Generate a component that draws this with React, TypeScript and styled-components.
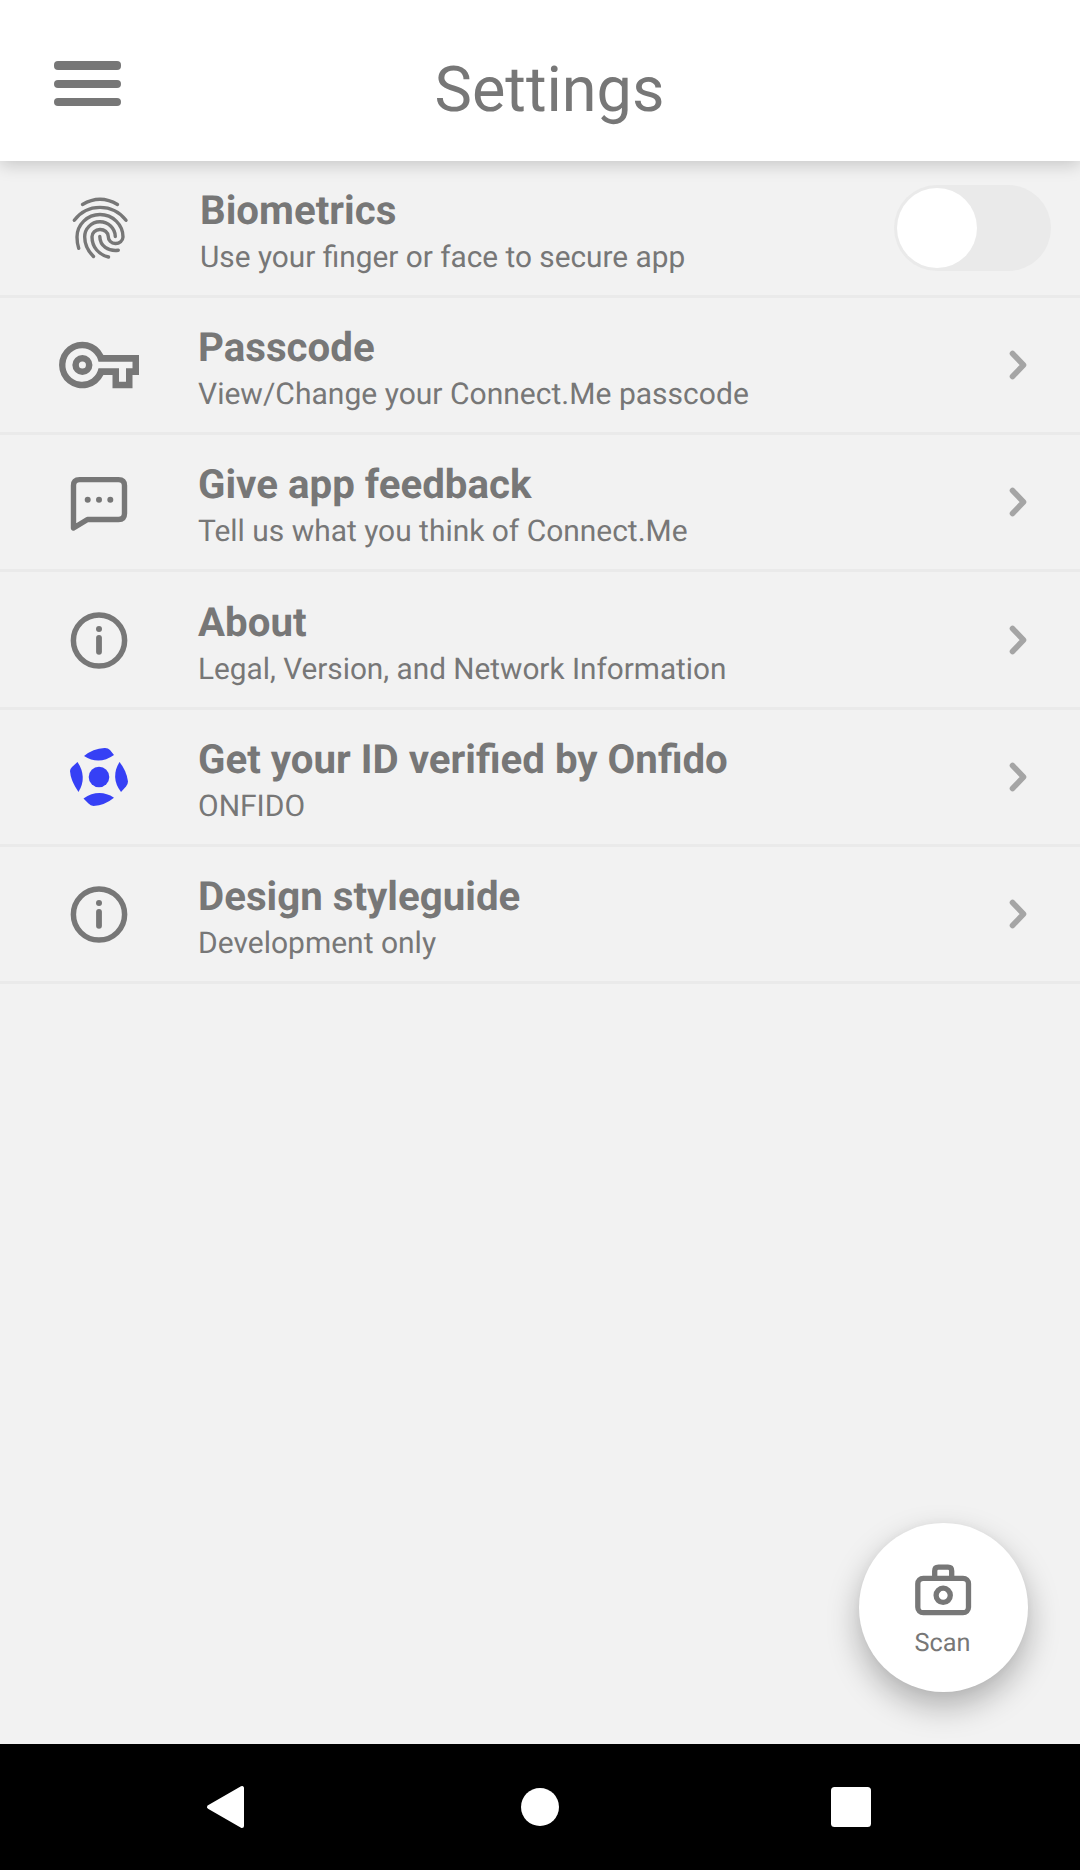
import React from "react";
import styled, { createGlobalStyle } from "styled-components";

const GlobalStyle = createGlobalStyle`
  * { box-sizing: border-box; }
  body { margin: 0; background: #f2f2f2; }
`;

const Screen = styled.div`
  display: flex;
  flex-direction: column;
  width: 1080px;
  height: 1870px;
  background: #f2f2f2;
  color: #777;
  font-family: Roboto, "Liberation Sans", sans-serif;
  text-rendering: geometricPrecision;
  overflow: hidden;
`;

const Header = styled.header`
  display: grid;
  grid-template-columns: 175px 1fr 156px;
  height: 161px;
  flex: none;
  background: #fff;
  box-shadow: 0 4px 16px rgba(0, 0, 0, 0.18);
  z-index: 1;
`;

const MenuButton = styled.button`
  display: flex;
  flex-direction: column;
  gap: 10.2px;
  width: 67px;
  height: max-content;
  margin: 61.4px 0 0 54px;
  padding: 0;
  border: 0;
  background: none;
`;

const MenuBar = styled.span`
  height: 8.2px;
  border-radius: 4px;
  background: #777;
`;

const Title = styled.h1`
  margin: 54px 0 0;
  font-size: 63px;
  line-height: 74px;
  font-weight: 400;
  text-align: center;
`;

const List = styled.main`
  flex: 1;
`;

const Row = styled.div<{ $inset?: number; $height?: number }>`
  display: grid;
  grid-template-columns: 198px 1fr auto;
  align-items: center;
  height: ${(p) => p.$height ?? 137}px;
  padding-left: ${(p) => p.$inset ?? 0}px;
  border-bottom: 3px solid #eaeaea;
`;

const IconCell = styled.div<{ $left?: number; $top?: number }>`
  display: flex;
  justify-content: center;
  padding-left: ${(p) => p.$left ?? 2}px;
  padding-right: ${(p) => (p.$left === 0 ? 2 : 0)}px;
  padding-top: ${(p) => p.$top ?? 0}px;
`;

const RowCopy = styled.div`
  padding-top: 12px;
`;

const RowTitle = styled.div`
  font-size: 40.25px;
  line-height: 46px;
  font-weight: 700;
  white-space: nowrap;
`;

const RowText = styled.div<{ $size?: number }>`
  padding-top: 1px;
  font-size: ${(p) => p.$size ?? 30}px;
  line-height: 46px;
  height: 46px;
  white-space: nowrap;
`;

const Toggle = styled.div`
  width: 157px;
  height: 86px;
  padding: 3px;
  margin-right: 29px;
  border-radius: 43px;
  background: #eaeaea;
`;

const Knob = styled.div`
  width: 80px;
  height: 80px;
  border-radius: 50%;
  background: #fff;
`;

const Chevron = styled.svg`
  display: block;
  margin-right: 52px;
`;

const ScanButton = styled.button`
  position: absolute;
  left: 859px;
  top: 1523px;
  display: flex;
  flex-direction: column;
  align-items: center;
  width: 169px;
  height: 169px;
  padding: 41px 2px 0 0;
  border: 0;
  border-radius: 50%;
  background: #fff;
  color: #777;
  font: 400 25.3px/30px Roboto, "Liberation Sans", sans-serif;
  text-rendering: geometricPrecision;
  box-shadow: 0 14px 32px rgba(0, 0, 0, 0.28), 0 0 10px rgba(0, 0, 0, 0.03);
`;

const ScanLabel = styled.span`
  margin-top: 12px;
`;

const NavBar = styled.nav`
  display: grid;
  grid-template-columns: 384px 312px 384px;
  place-items: center;
  height: 126px;
  flex: none;
  background: #000;
`;

const NavIcon = styled.svg<{ $shift?: number }>`
  display: block;
  margin-left: ${(p) => p.$shift ?? 0}px;
`;

const stroke = { fill: "none", stroke: "#777", strokeLinecap: "round", strokeLinejoin: "round" } as const;

const Fingerprint = () => (
  <svg width="100" height="100" viewBox="0 0 100 100">
    <g {...stroke} strokeWidth="3.4">
      <path d="M32.500 24.500Q50 14 67.500 24.500" />
      <path d="M24.300 40.300Q34 27.400 50 27.400T76 40.300" />
      <path d="M28.700 68.300C27 63 27 60 27 57A23 22.500 0 0 1 73 57A7.350 6.800 0 0 1 58.300 56.500A8.150 7.300 0 0 0 42 57C42 67.500 49 74.500 58.500 77" />
      <path d="M43.500 76.500C37 70 34.700 64 34.700 57A15.300 15 0 0 1 65.300 56.500" />
      <path d="M49.800 56.500C50 66 58 71.500 68.300 70.300" />
    </g>
  </svg>
);

const Key = () => (
  <svg width="120" height="90" viewBox="0 0 120 90">
    <path
      fill="#777"
      fillRule="evenodd"
      d="M63.400 35A23.300 23.300 0 1 0 63.400 55H72.500V68.300H92.500V55H99V35ZM42.500 28.300A16.700 16.700 0 1 0 58.500 48.300H79V61.700H86V48.300H92.500V41.700H58.500A16.700 16.700 0 0 0 42.500 28.300Z"
    />
    <circle cx="42.400" cy="45" r="6.800" fill="none" stroke="#777" strokeWidth="6.500" />
  </svg>
);

const Feedback = () => (
  <svg width="100" height="90" viewBox="0 0 100 90">
    <path {...stroke} strokeWidth="5.400" d="M23.500 68V25.500Q23.500 19.600 29.500 19.600H68.500Q74.500 19.600 74.500 25.500V53.500Q74.500 59.500 68.500 59.500H37.500Z" />
    <g fill="#777">
      <circle cx="37.700" cy="39.700" r="3" />
      <circle cx="49" cy="39.700" r="3" />
      <circle cx="60.300" cy="39.700" r="3" />
    </g>
  </svg>
);

const Info = () => (
  <svg width="100" height="100" viewBox="0 0 100 100">
    <circle cx="49" cy="50.500" r="25.600" {...stroke} strokeWidth="5.500" />
    <circle cx="49" cy="39" r="3" fill="#777" />
    <path {...stroke} strokeWidth="5.800" d="M49 47.800V61.800" />
  </svg>
);

const Onfido = () => (
  <svg width="100" height="100" viewBox="0 0 100 100" fill="#3640f5">
    <circle cx="49" cy="47" r="10.300" />
    <path d="M34 26Q43 18.500 54.500 18Q58 17.800 60 20L64 25Q49 35.500 34 26Z" />
    <path d="M69.500 32Q76.500 40.500 78 51.500Q78 54 76 56.500L71 62Q60 47.500 69.500 32Z" />
    <path d="M64 67.700Q55 75.200 43.500 75.900Q40.500 75.900 38.500 73.500L33.500 68.500Q49 58 64 67.700Z" />
    <path d="M28.500 62Q20.500 50.500 20 41Q20 39 22 37L27.500 32Q37.500 47 28.500 62Z" />
  </svg>
);

const Camera = () => (
  <svg width="58" height="53" viewBox="0 0 58 53" {...stroke} strokeWidth="5.300">
    <rect x="3.800" y="14.300" width="50.700" height="34.400" rx="5.500" />
    <path d="M20.700 14V7Q20.700 3.200 24.500 3.200H34Q37.700 3.200 37.700 7V14" />
    <circle cx="29.200" cy="31.300" r="7.100" />
  </svg>
);

const items = [
  { title: "Passcode", text: "View/Change your Connect.Me passcode", icon: <Key />, top: 0, size: 30.05, height: 137 },
  { title: "Give app feedback", text: "Tell us what you think of Connect.Me", icon: <Feedback />, top: 5, size: 29.95, height: 137 },
  { title: "About", text: "Legal, Version, and Network Information", icon: <Info />, top: 0, size: 29.75, height: 138 },
  { title: "Get your ID verified by Onfido", text: "ONFIDO", icon: <Onfido />, top: 6, size: 30, height: 137 },
  { title: "Design styleguide", text: "Development only", icon: <Info />, top: 0, size: 30, height: 137 },
];

export default function App() {
  return (
    <Screen>
      <GlobalStyle />
      <Header>
        <MenuButton aria-label="Menu">
          <MenuBar />
          <MenuBar />
          <MenuBar />
        </MenuButton>
        <Title>Settings</Title>
      </Header>
      <List>
        <Row $inset={2}>
          <IconCell $left={0} $top={4}><Fingerprint /></IconCell>
          <RowCopy>
            <RowTitle>Biometrics</RowTitle>
            <RowText $size={29.8}>Use your finger or face to secure app</RowText>
          </RowCopy>
          <Toggle><Knob /></Toggle>
        </Row>
        {items.map((item) => (
          <Row key={item.title} $height={item.height}>
            <IconCell $top={item.top}>{item.icon}</IconCell>
            <RowCopy>
              <RowTitle>{item.title}</RowTitle>
              <RowText $size={item.size}>{item.text}</RowText>
            </RowCopy>
            <Chevron width="20" height="32" viewBox="0 0 20 32">
              <path d="M4.500 4.500L15.500 16L4.500 27.500" fill="none" stroke="#a5a5a5" strokeWidth="5.600" strokeLinecap="round" strokeLinejoin="round" />
            </Chevron>
          </Row>
        ))}
      </List>
      <ScanButton>
        <Camera />
        <ScanLabel>Scan</ScanLabel>
      </ScanButton>
      <NavBar>
        <NavIcon $shift={68} width="40" height="44" viewBox="0 0 40 44">
          <path d="M3 22L36 3V41Z" fill="#fff" stroke="#fff" strokeWidth="4" strokeLinejoin="round" />
        </NavIcon>
        <NavIcon width="40" height="40" viewBox="0 0 40 40"><circle cx="20" cy="20" r="19" fill="#fff" /></NavIcon>
        <NavIcon $shift={-74} width="40" height="40" viewBox="0 0 40 40"><rect width="40" height="40" rx="3.500" fill="#fff" /></NavIcon>
      </NavBar>
    </Screen>
  );
}
